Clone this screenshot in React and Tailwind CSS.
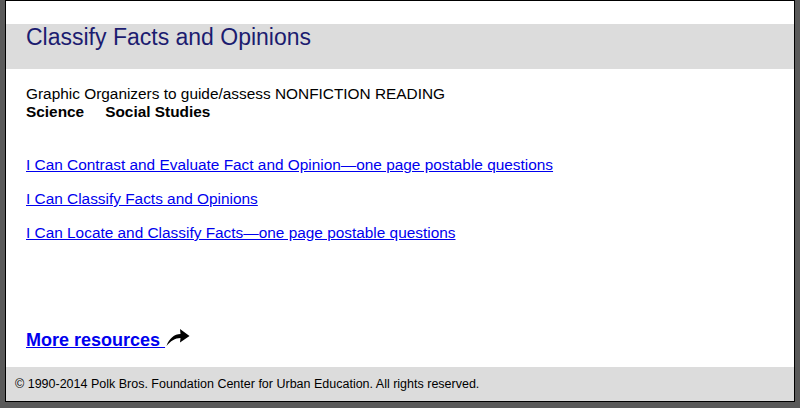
import React from 'react';

const links = [
  'I Can Contrast and Evaluate Fact and Opinion\u2014one page postable questions',
  'I Can Classify Facts and Opinions',
  'I Can Locate and Classify Facts\u2014one page postable questions',
];

const CurvedArrow = () => (
  <svg width="24" height="19" viewBox="0 0 24 19" className="inline-block ml-[1px] align-[-1px]">
    <path d="M0.5 18 C3 10.5 8.5 6 14.5 6 L14 1 L23.5 8 L14 14.5 L14.5 10 C9 10 4.5 13 0.5 18 Z" fill="#000" />
  </svg>
);

export default function App() {
  return (
    <div className="h-[408px] w-[800px] bg-[#5a5a5a] pl-[5px] pr-[5px] pb-[6px]" style={{ fontFamily: '"Liberation Sans", Arial, sans-serif' }}>
      <div className="h-[402px] border border-black bg-white flex flex-col">
        <div className="mt-[23px] h-[45px] bg-[#dcdcdc] pl-[20px] pt-[1px]">
          <h1 className="text-[23px] leading-[25px] text-[#1c1c70]">Classify Facts and Opinions</h1>
        </div>

        <div className="pl-[20px]">
          <p className="mt-[16px] text-[15.4px] leading-[18px] text-black">
            Graphic Organizers to guide/assess NONFICTION READING
          </p>
          <p className="text-[15.4px] leading-[18px] font-bold text-black flex gap-[21px]">
            <span>Science</span>
            <span>Social Studies</span>
          </p>

          <div className="mt-[35px] flex flex-col gap-[16px]">
            {links.map(l => (
              <a key={l} href="#" className="text-[15.4px] leading-[18px] text-[#0000ee] underline">{l}</a>
            ))}
          </div>

          <div className="mt-[86px] text-[18px] leading-[22px] font-bold">
            <a href="#" className="text-[#0000ee] underline">More resources </a>
            <CurvedArrow />
          </div>
        </div>

        <div className="mt-auto h-[34px] bg-[#dcdcdc] pl-[9px] flex items-center text-[12.5px] text-black">
          © 1990-2014 Polk Bros. Foundation Center for Urban Education. All rights reserved.
        </div>
      </div>
    </div>
  );
}
